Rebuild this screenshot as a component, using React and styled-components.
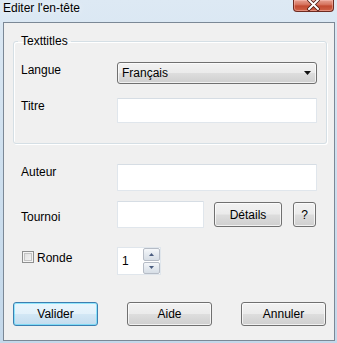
import React from 'react';
import styled, { createGlobalStyle } from 'styled-components';

const GlobalStyle = createGlobalStyle`
  html, body {
    margin: 0;
    padding: 0;
  }
  body {
    font-family: "Liberation Sans", Arial, sans-serif;
    font-size: 12px;
    color: #111;
  }
`;

// Window chrome
const Frame = styled.div`
  width: 337px;
  height: 343px;
  box-sizing: border-box;
  display: flex;
  flex-direction: column;
  padding: 0 2px 2px 3px;
  background: linear-gradient(to bottom, #dde9f4 0%, #cfe0ef 45%, #c4d8ea 100%);
  overflow: hidden;
`;

const TitleBar = styled.div`
  height: 22px;
  flex-shrink: 0;
  display: flex;
  justify-content: space-between;
  align-items: flex-start;
`;

const Title = styled.span`
  padding-top: 1px;
  line-height: 14px;
  font-size: 12px;
  color: #000;
  text-shadow: 0 0 6px rgba(255, 255, 255, 0.9);
`;

const CloseButton = styled.div`
  width: 41px;
  height: 12px;
  margin-right: 1px;
  box-sizing: border-box;
  border: 1px solid #6e2a20;
  border-top: none;
  border-radius: 0 0 4px 4px;
  background: linear-gradient(to bottom, #e6a091 0%, #d77560 40%, #c24a31 55%, #cf6247 100%);
  box-shadow: inset 0 0 0 1px rgba(255, 200, 190, 0.45);
  display: flex;
  justify-content: center;
  align-items: flex-end;
  overflow: hidden;
`;

const Client = styled.div`
  flex: 1;
  box-sizing: border-box;
  border: 1px solid #7b8896;
  background: #f0f0f0;
  display: flex;
  flex-direction: column;
  padding: 11px 7px 14px 9px;
`;

// Form parts
const Group = styled.fieldset`
  margin: 0;
  min-width: 0;
  padding: 0 7px 20px 7px;
  border: 1px solid #d5dfe5;
  border-radius: 3px;
  box-shadow: inset 1px 1px 0 #fff, 1px 1px 0 #fff;
`;

const Legend = styled.legend`
  padding: 0 3px;
  margin-left: -3px;
  line-height: 14px;
  color: #000;
`;

const Section = styled.div`
  display: flex;
  flex-direction: column;
  padding-left: ${p => p.$inset || 0}px;
`;

const Row = styled.div`
  display: flex;
  align-items: flex-start;
  margin-top: ${p => p.$top || 0}px;
`;

const Label = styled.div`
  flex: 0 0 96px;
  line-height: 14px;
  padding-top: ${p => p.$offset || 0}px;
  color: #000;
`;

const TextBox = styled.div`
  width: ${p => p.$width || 200}px;
  height: ${p => p.$height || 26}px;
  box-sizing: border-box;
  background: #fff;
  border: 1px solid #e0e6ec;
  border-top-color: #d6dde4;
  border-radius: 1px;
`;

const Combo = styled.div`
  width: 200px;
  height: 22px;
  box-sizing: border-box;
  border: 1px solid #707070;
  border-radius: 3px;
  background: linear-gradient(to bottom, #f2f2f2 0%, #ebebeb 48%, #dddddd 52%, #cfcfcf 100%);
  box-shadow: inset 0 0 0 1px rgba(255, 255, 255, 0.7);
  display: flex;
  align-items: center;
  justify-content: space-between;
  padding: 0 5px 0 4px;
  color: #000;
`;

const PushButton = styled.div`
  width: ${p => p.$width}px;
  height: ${p => p.$height || 24}px;
  margin-left: ${p => p.$left || 0}px;
  margin-top: ${p => p.$top || 0}px;
  box-sizing: border-box;
  border: 1px solid ${p => (p.$default ? '#3c7fb1' : '#707070')};
  border-radius: 3px;
  background: ${p =>
    p.$default
      ? 'linear-gradient(to bottom, #eaf6fd 0%, #e3f1fa 48%, #d2e7f5 52%, #c3dcee 100%)'
      : 'linear-gradient(to bottom, #f2f2f2 0%, #ebebeb 48%, #dddddd 52%, #cfcfcf 100%)'};
  box-shadow: ${p =>
    p.$default
      ? 'inset 0 0 0 1px rgba(72, 216, 251, 0.55)'
      : 'inset 0 0 0 1px rgba(255, 255, 255, 0.7)'};
  display: flex;
  align-items: center;
  justify-content: center;
  color: #000;
  line-height: 14px;
`;

const CheckField = styled.div`
  flex: 0 0 96px;
  display: flex;
  align-items: flex-start;
`;

const CheckBox = styled.div`
  width: 12px;
  height: 12px;
  margin: 4px 3px 0 1px;
  box-sizing: border-box;
  border: 1px solid #8e8f8f;
  background: linear-gradient(to bottom right, #dcdcdc, #f8f8f8);
  box-shadow: inset 0 0 0 1px #f4f4f4, inset 0 0 0 2px #c4c4c4;
  flex-shrink: 0;
`;

const CheckText = styled.span`
  padding-top: 4px;
  line-height: 14px;
  color: #000;
`;

const Spinner = styled.div`
  width: 44px;
  height: 28px;
  display: flex;
  box-sizing: border-box;
  background: #fff;
  border: 1px solid #e0e6ec;
`;

const SpinValue = styled.div`
  flex: 1;
  padding: 6px 0 0 4px;
  line-height: 14px;
  color: #000;
`;

const SpinButtons = styled.div`
  width: 17px;
  display: flex;
  flex-direction: column;
  gap: 1px;
`;

const SpinButton = styled.div`
  flex: 1;
  box-sizing: border-box;
  border: 1px solid #b6bcc6;
  border-radius: 2px;
  background: linear-gradient(to bottom, #f5f7fa 0%, #e4e9ef 50%, #d7dee6 100%);
  display: flex;
  align-items: center;
  justify-content: center;
`;

const ButtonRow = styled.div`
  margin-top: auto;
  margin-right: 1px;
  display: flex;
  justify-content: space-between;
`;

const Arrow = ({ down, color = '#4b5d80', w = 5, h = 3 }) => (
  <svg width={w} height={h} viewBox={`0 0 ${w} ${h}`}>
    <polygon
      points={down ? `0,0 ${w},0 ${w / 2},${h}` : `0,${h} ${w},${h} ${w / 2},0`}
      fill={color}
    />
  </svg>
);

const CloseGlyph = () => (
  <svg width="13" height="11" viewBox="0 0 13 11">
    <path d="M2 0 L11 9 M11 0 L2 9" stroke="#4a1a12" strokeWidth="3.6" strokeLinecap="round" />
    <path d="M2 0 L11 9 M11 0 L2 9" stroke="#ffffff" strokeWidth="2" strokeLinecap="round" />
  </svg>
);

export default function App() {
  return (
    <>
      <GlobalStyle />
      <Frame>
        <TitleBar>
          <Title>Editer l'en-tête</Title>
          <CloseButton>
            <CloseGlyph />
          </CloseButton>
        </TitleBar>
        <Client>
          <Group>
            <Legend>Texttitles</Legend>
            <Section>
              <Row $top={14}>
                <Label $offset={1}>Langue</Label>
                <Combo>
                  <span>Français</span>
                  <Arrow down color="#111" w={7} h={4} />
                </Combo>
              </Row>
              <Row $top={14}>
                <Label $offset={1}>Titre</Label>
                <TextBox $height={25} />
              </Row>
            </Section>
          </Group>

          <Section $inset={8}>
            <Row $top={20}>
              <Label $offset={1}>Auteur</Label>
              <TextBox $height={27} />
            </Row>
            <Row $top={10}>
              <Label $offset={9}>Tournoi</Label>
              <TextBox $width={87} $height={27} />
              <PushButton $width={68} $height={25} $left={10} $top={1}>
                Détails
              </PushButton>
              <PushButton $width={23} $height={25} $left={11} $top={1}>
                ?
              </PushButton>
            </Row>
            <Row $top={19}>
              <CheckField>
                <CheckBox />
                <CheckText>Ronde</CheckText>
              </CheckField>
              <Spinner>
                <SpinValue>1</SpinValue>
                <SpinButtons>
                  <SpinButton>
                    <Arrow />
                  </SpinButton>
                  <SpinButton>
                    <Arrow down />
                  </SpinButton>
                </SpinButtons>
              </Spinner>
            </Row>
          </Section>

          <ButtonRow>
            <PushButton $width={85} $default>Valider</PushButton>
            <PushButton $width={85}>Aide</PushButton>
            <PushButton $width={85}>Annuler</PushButton>
          </ButtonRow>
        </Client>
      </Frame>
    </>
  );
}
